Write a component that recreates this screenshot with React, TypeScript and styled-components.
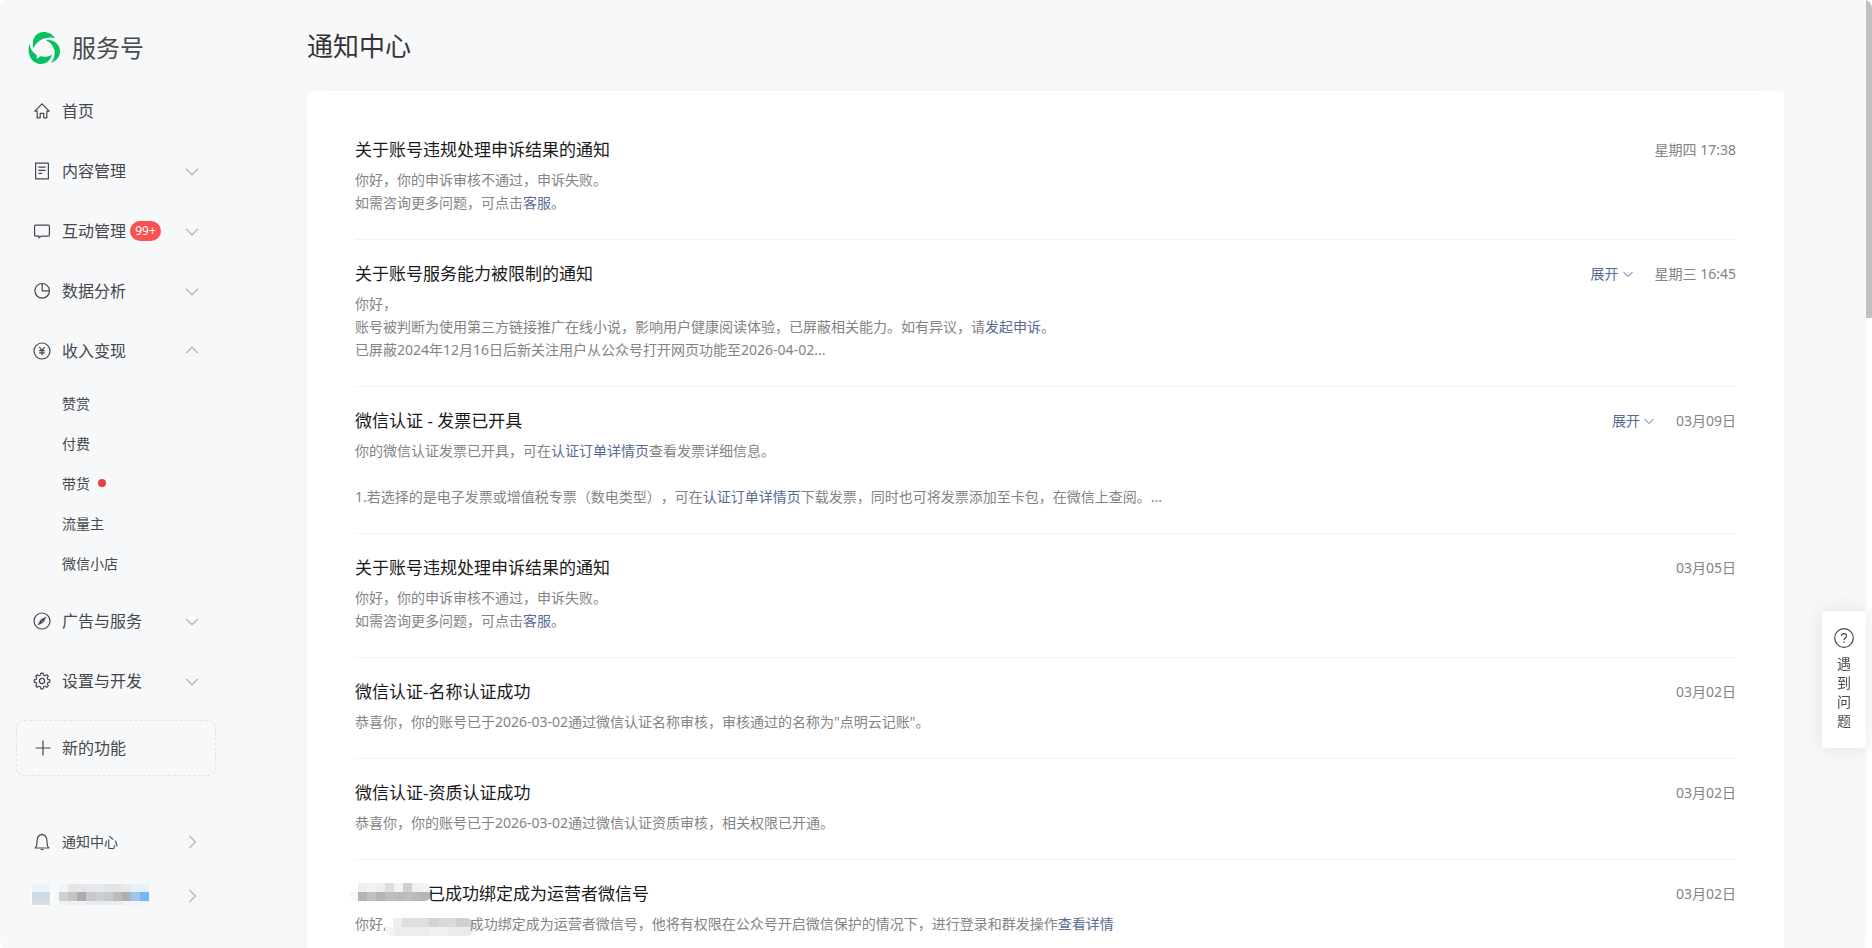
import React from "react";
import styled, { createGlobalStyle } from "styled-components";

const Global = createGlobalStyle`
  * { box-sizing: border-box; }
  html, body { margin: 0; padding: 0; }
  body {
    background: #ffffff;
    color: #353535;
    font-family: "Noto Sans", "Noto Sans CJK SC", sans-serif;
    font-size: 14px;
    text-spacing-trim: space-all;
  }
  a { color: inherit; text-decoration: none; }
  h1, h2, p, ul { margin: 0; padding: 0; font-weight: 400; }
  ul { list-style: none; }
  button { border: 0; padding: 0; background: none; font: inherit; color: inherit; cursor: pointer; }
`;

const Shell = styled.div`
  display: flex;
  height: 100vh;
  overflow: hidden;
  background: #f6f8fa;
  border-radius: 8px;
`;

const Sidebar = styled.aside`
  flex: 0 0 225px;
  display: flex;
  flex-direction: column;
  padding: 15px 9px 0 16px;
`;

const Brand = styled.a`
  display: flex;
  align-items: center;
  gap: 12px;
  height: 66px;
  padding-left: 12px;
  color: #4a4a4c;
  font-size: 24px;
  line-height: 32px;
`;

const NavLink = styled.a<{ $height?: number; $small?: boolean }>`
  display: flex;
  align-items: center;
  width: 100%;
  height: ${(p) => p.$height ?? 60}px;
  padding: 0 17px;
  font-size: ${(p) => (p.$small ? 14 : 16)}px;
  line-height: 24px;
  color: #46474a;
`;

const IconBox = styled.span`
  display: flex;
  flex: 0 0 18px;
  margin-right: 11px;
`;

const Arrow = styled.span`
  display: flex;
  margin-left: auto;
  color: #b4b6b8;
`;

const Badge = styled.span`
  min-width: 31px;
  height: 20px;
  margin-left: 4px;
  border-radius: 10px;
  background: #fa5151;
  color: #ffffff;
  font-size: 12px;
  line-height: 19px;
  text-align: center;
`;

const SubList = styled.ul`
  padding: 2px 0 8px;
`;

const SubLink = styled.a`
  display: flex;
  align-items: center;
  gap: 8px;
  height: 40px;
  padding-left: 46px;
  color: #46474a;
`;

const Dot = styled.i`
  width: 8px;
  height: 8px;
  border-radius: 50%;
  background: #e64340;
`;

const NewFeature = styled.button`
  display: flex;
  align-items: center;
  height: 56px;
  margin-top: 9px;
  padding: 0 16px;
  border: 1px dashed #e1e3e5;
  border-radius: 8px;
  font-size: 16px;
  line-height: 24px;
  color: #46474a;
`;

const Account = styled.div`
  margin-top: 39px;
`;

const MaskedAccount = styled.span`
  display: flex;
  margin-left: -8px;
`;

const Main = styled.main`
  flex: 1;
  min-width: 0;
  padding: 28px 82px 0;
`;

const PageTitle = styled.h1`
  height: 63px;
  font-size: 26px;
  line-height: 36px;
  color: #353535;
`;

const Card = styled.section`
  padding: 25px 48px;
  border-radius: 4px;
  background: #ffffff;
  box-shadow: 0 1px 20px rgba(0, 0, 0, 0.02);
`;

const Item = styled.li`
  padding: 22px 0 25px;
  border-bottom: 1px solid #f2f2f3;
`;

const ItemHead = styled.div`
  display: flex;
  align-items: center;
  gap: 22px;
  line-height: 24px;
`;

const ItemTitle = styled.h2`
  display: flex;
  flex: 1;
  font-size: 17px;
  color: #1a1a1a;
`;

const Expand = styled.button`
  display: flex;
  align-items: center;
  gap: 4px;
  color: #576b95;
`;

const Time = styled.time`
  color: #838485;
`;

const Text = styled.p`
  min-height: 23px;
  line-height: 23px;
  color: #838485;
`;

const Body = styled.div`
  margin-top: 6px;
`;

const InlineLink = styled.a`
  && { color: #576b95; }
`;

const TitleMask = styled.svg`
  margin: 1px -4px 0 -6px;
`;

const TextMask = styled.svg`
  margin: 6px -4px -1px -2px;
  vertical-align: top;
`;

const Scrollbar = styled.div`
  flex: 0 0 6px;
  background: #ffffff;
`;

const Thumb = styled.div`
  height: 33.5%;
  background: #c1c1c1;
`;

const Help = styled.button`
  position: fixed;
  right: 6px;
  bottom: 200px;
  display: flex;
  flex-direction: column;
  align-items: center;
  width: 44px;
  height: 137px;
  padding-top: 17px;
  border-radius: 2px 0 0 2px;
  background: #ffffff;
  box-shadow: 0 0 20px rgba(0, 0, 0, 0.1);
  color: #4a4a4c;
`;

const HelpText = styled.span`
  width: 14px;
  margin-top: 6px;
  line-height: 19px;
  font-size: 14px;
`;

const glyphs: Record<string, React.ReactNode> = {
  home: <path d="M1.8 9.2 9 1.8l7.2 7.4h-2.4v6.6h-3v-4.5H7.2v4.5h-3V9.2z" />,
  doc: <path d="M2.6 1.1h12.8v15.8H2.6zM5.4 5.2h7.2M5.4 8.3h7.2M5.4 11.4h3.8" />,
  chat: <path d="M2.6 3.1h12.8q1 0 1 1v9q0 1-1 1H8.3L6 15.9v-1.8H2.6q-1 0-1-1v-9q0-1 1-1z" />,
  pie: <path d="M9.2 1.5a7.3 7.3 0 1 0 7.3 7.3H9.2zM9.2 1.5a7.3 7.3 0 0 1 7.3 7.3" />,
  yen: (
    <>
      <circle cx="9" cy="9" r="8" />
      <path d="M6.4 5.2 9 8.4l2.6-3.2M9 8.4v4.8M6.2 8.6h5.6M6.2 10.8h5.6" />
    </>
  ),
  compass: (
    <>
      <circle cx="9" cy="9" r="8" />
      <path d="M13 5 10.4 10 8 7.600zM5 13l2.600-5L10 10.400z" fill="currentColor" strokeWidth="0.500" />
    </>
  ),
  gear: (
    <>
      <circle cx="9" cy="9" r="2.6" />
      <path d="M7.9 1.2h2.2l.5 2 1.5.6 1.7-1.1 1.5 1.5-1.1 1.7.6 1.5 2 .5v2.2l-2 .5-.6 1.5 1.1 1.7-1.5 1.5-1.7-1.1-1.5.6-.5 2H7.9l-.5-2-1.5-.6-1.7 1.1-1.5-1.5 1.1-1.7-.6-1.5-2-.5V7.9l2-.5.6-1.5-1.1-1.7 1.5-1.5 1.7 1.1 1.5-.6z" />
    </>
  ),
  bell: (
    <>
      <path d="M2.2 15h13.6c-1.5-1.3-1.7-2.5-1.8-6.2C14 5 12.4 1.7 9 1.7S4 5 4 8.8C3.9 12.5 3.7 13.7 2.2 15z" />
      <path d="M7.6 16.5h2.8M9 .5v1.2" />
    </>
  ),
  plus: <path d="M10 1.5v15M2.5 9h15" />,
};

function Glyph({ name }: { name: string }) {
  return (
    <IconBox>
      <svg width="18" height="18" viewBox="0 0 18 18" fill="none" stroke="currentColor" strokeWidth="1.2" strokeLinejoin="round" aria-hidden="true">
        {glyphs[name]}
      </svg>
    </IconBox>
  );
}

const chevrons = {
  down: "M1 4.8l6 6 6-6",
  up: "M1 9.2l6-6 6 6",
  right: "M4.500 1l6 6-6 6",
};

function Chevron({ to }: { to: keyof typeof chevrons }) {
  return (
    <Arrow>
      <svg width="14" height="14" viewBox="0 0 14 14" fill="none" stroke="currentColor" strokeWidth="1.3" aria-hidden="true">
        <path d={chevrons[to]} />
      </svg>
    </Arrow>
  );
}

function Logo() {
  return (
    <svg width="32" height="32" viewBox="0 0 32 32" fill="#07c160" aria-hidden="true">
      <path d="M5.300 16.500C3 6.500 8.500 0 15.500 0c5 0 9.300 2.300 11.500 6C18 4 9 8 5.300 16.500z" />
      <path d="M1.500 12C-1.800 22 4 32 12.500 32 19 32 22.500 28 24 22.500c-3 2.500-7.500 2.700-11.500 1.800L9 27l-.4-4C4.500 20.500 2 16.500 1.500 12z" />
      <path d="M18 8.300C26.500 7 32 13 32 19.300c0 5-3 9.700-9 11.400C29 24 28 13 18 8.300z" />
    </svg>
  );
}

type Cell = [number, number, string, number?, number?];

function Mosaic({ cells }: { cells: Cell[] }) {
  return (
    <>
      {cells.map(([x, y, fill, w = 9, h = 9], i) => (
        <rect key={i} x={x} y={y} width={w} height={h} fill={fill} />
      ))}
    </>
  );
}

const accountCells: Cell[] = [
  [7, 0, "#edf4f9", 18, 8], [7, 8, "#cbdce7", 18], [7, 17, "#dcdee0", 18, 4],
  [34, 0, "#f2f3f4"], [43, 0, "#e5e6e8", 18, 8], [61, 0, "#e7e8ea", 18, 8], [79, 0, "#e2e4e6", 18, 8], [97, 0, "#e7eaec", 9, 8], [106, 0, "#e6f1fa", 18, 8],
  [34, 8, "#d0d0ce"], [43, 8, "#c3c5c3"], [52, 8, "#abacb1"], [61, 8, "#c6c8ca"], [70, 8, "#cccfd2"], [79, 8, "#c8cbcd"], [88, 8, "#bdbcbc"], [97, 8, "#adb1b3"], [106, 8, "#98c7f2"], [115, 8, "#7ab7f1"],
  [34, 17, "#eff1f2", 27, 4], [61, 17, "#e8eaec", 36, 4], [97, 17, "#f0f2f4", 27, 4],
];

const titleCells: Cell[] = [
  [0, 9, "#fdf6f0"], [9, 0, "#eeeff1"], [18, 0, "#f3f3f4"], [27, 0, "#efefef"], [36, 0, "#dcdde0"], [45, 0, "#f4f4f2"], [54, 0, "#cfcfd3"], [63, 0, "#eff0f0"], [72, 0, "#f2f2f0", 12],
  [9, 9, "#b1b4bb"], [18, 9, "#c4c0bd"], [27, 9, "#b2b5b8"], [36, 9, "#c0bfba"], [45, 9, "#b6bcc3"], [54, 9, "#bfbebb"], [63, 9, "#b7b9bb"], [72, 9, "#b6b5b4", 12],
];

const textCells: Cell[] = [
  [0, 9, "#f4f4f4"], [8, 0, "#eeeeee"], [17, 0, "#dedede", 27], [44, 0, "#d3d3d3"], [53, 0, "#d9d9d9", 18], [71, 0, "#d0d0d0", 18],
  [9, 9, "#ededed", 18], [27, 9, "#efedec", 18], [45, 9, "#f1f1f1", 18], [63, 9, "#ebebeb", 26],
];

type Notice = {
  title: React.ReactNode;
  time: string;
  expandable?: boolean;
  lines: React.ReactNode[];
};

const appeal: React.ReactNode[] = [
  "你好，你的申诉审核不通过，申诉失败。",
  <>如需咨询更多问题，可点击<InlineLink href="#service">客服</InlineLink>。</>,
];

const notices: Notice[] = [
  { title: "关于账号违规处理申诉结果的通知", time: "星期四 17:38", lines: appeal },
  {
    title: "关于账号服务能力被限制的通知",
    time: "星期三 16:45",
    expandable: true,
    lines: [
      "你好，",
      <>账号被判断为使用第三方链接推广在线小说，影响用户健康阅读体验，已屏蔽相关能力。如有异议，请<InlineLink href="#appeal">发起申诉</InlineLink>。</>,
      "已屏蔽2024年12月16日后新关注用户从公众号打开网页功能至2026-04-02...",
    ],
  },
  {
    title: "微信认证 - 发票已开具",
    time: "03月09日",
    expandable: true,
    lines: [
      <>你的微信认证发票已开具，可在<InlineLink href="#order">认证订单详情页</InlineLink>查看发票详细信息。</>,
      "",
      <>1.若选择的是电子发票或增值税专票（数电类型），可在<InlineLink href="#order">认证订单详情页</InlineLink>下载发票，同时也可将发票添加至卡包，在微信上查阅。...</>,
    ],
  },
  { title: "关于账号违规处理申诉结果的通知", time: "03月05日", lines: appeal },
  {
    title: "微信认证-名称认证成功",
    time: "03月02日",
    lines: ['恭喜你，你的账号已于2026-03-02通过微信认证名称审核，审核通过的名称为"点明云记账"。'],
  },
  {
    title: "微信认证-资质认证成功",
    time: "03月02日",
    lines: ["恭喜你，你的账号已于2026-03-02通过微信认证资质审核，相关权限已开通。"],
  },
  {
    title: (
      <>
        <TitleMask width="83" height="18" viewBox="0 0 83 18" aria-hidden="true">
          <clipPath id="titleClip"><rect width="83" height="18" rx="8" /></clipPath>
          <g clipPath="url(#titleClip)"><Mosaic cells={titleCells} /></g>
        </TitleMask>
        已成功绑定成为运营者微信号
      </>
    ),
    time: "03月02日",
    lines: [
      <>
        你好,
        <TextMask width="89" height="18" viewBox="0 0 89 18" aria-hidden="true">
          <clipPath id="textClip"><rect width="89" height="18" rx="8" /></clipPath>
          <g clipPath="url(#textClip)"><Mosaic cells={textCells} /></g>
        </TextMask>
        成功绑定成为运营者微信号，他将有权限在公众号开启微信保护的情况下，进行登录和群发操作<InlineLink href="#detail">查看详情</InlineLink>
      </>,
    ],
  },
];

export default function App() {
  return (
    <>
      <Global />
      <Shell>
        <Sidebar>
          <Brand href="#home"><Logo />服务号</Brand>
          <nav aria-label="主导航">
            <NavLink href="#index"><Glyph name="home" />首页</NavLink>
            <NavLink href="#content"><Glyph name="doc" />内容管理<Chevron to="down" /></NavLink>
            <NavLink href="#interact"><Glyph name="chat" />互动管理<Badge>99+</Badge><Chevron to="down" /></NavLink>
            <NavLink href="#data"><Glyph name="pie" />数据分析<Chevron to="down" /></NavLink>
            <NavLink href="#income"><Glyph name="yen" />收入变现<Chevron to="up" /></NavLink>
            <SubList>
              <li><SubLink href="#reward">赞赏</SubLink></li>
              <li><SubLink href="#pay">付费</SubLink></li>
              <li><SubLink href="#goods">带货<Dot /></SubLink></li>
              <li><SubLink href="#traffic">流量主</SubLink></li>
              <li><SubLink href="#shop">微信小店</SubLink></li>
            </SubList>
            <NavLink href="#ads"><Glyph name="compass" />广告与服务<Chevron to="down" /></NavLink>
            <NavLink href="#settings"><Glyph name="gear" />设置与开发<Chevron to="down" /></NavLink>
          </nav>
          <NewFeature type="button"><Glyph name="plus" />新的功能</NewFeature>
          <Account>
            <NavLink href="#notice" $height={54} $small><Glyph name="bell" />通知中心<Chevron to="right" /></NavLink>
            <NavLink href="#account" $height={54} $small aria-label="账号">
              <MaskedAccount>
                <svg width="124" height="24" viewBox="0 0 124 24" aria-hidden="true">
                  <circle cx="16" cy="11" r="12" fill="#fcfdfe" />
                  <Mosaic cells={accountCells} />
                </svg>
              </MaskedAccount>
              <Chevron to="right" />
            </NavLink>
          </Account>
        </Sidebar>
        <Main>
          <PageTitle>通知中心</PageTitle>
          <Card>
            <ul>
              {notices.map((n, i) => (
                <Item key={i}>
                  <ItemHead>
                    <ItemTitle>{n.title}</ItemTitle>
                    {n.expandable && (
                      <Expand type="button">
                        展开
                        <svg width="10" height="10" viewBox="0 0 10 10" fill="none" stroke="currentColor" strokeWidth="1" aria-hidden="true">
                          <path d="M.5 3 5 7.500 9.500 3" />
                        </svg>
                      </Expand>
                    )}
                    <Time>{n.time}</Time>
                  </ItemHead>
                  <Body>
                    {n.lines.map((line, j) => <Text key={j}>{line}</Text>)}
                  </Body>
                </Item>
              ))}
            </ul>
          </Card>
        </Main>
        <Scrollbar><Thumb /></Scrollbar>
      </Shell>
      <Help type="button">
        <svg width="20" height="20" viewBox="0 0 20 20" fill="none" stroke="currentColor" strokeWidth="1.2" aria-hidden="true">
          <circle cx="10" cy="10" r="9.3" />
          <path d="M7.5 8c0-3.300 5-3.300 5 0 0 1.900-2.500 2-2.500 4.200M10 13.600v1.300" />
        </svg>
        <HelpText>遇到问题</HelpText>
      </Help>
    </>
  );
}
